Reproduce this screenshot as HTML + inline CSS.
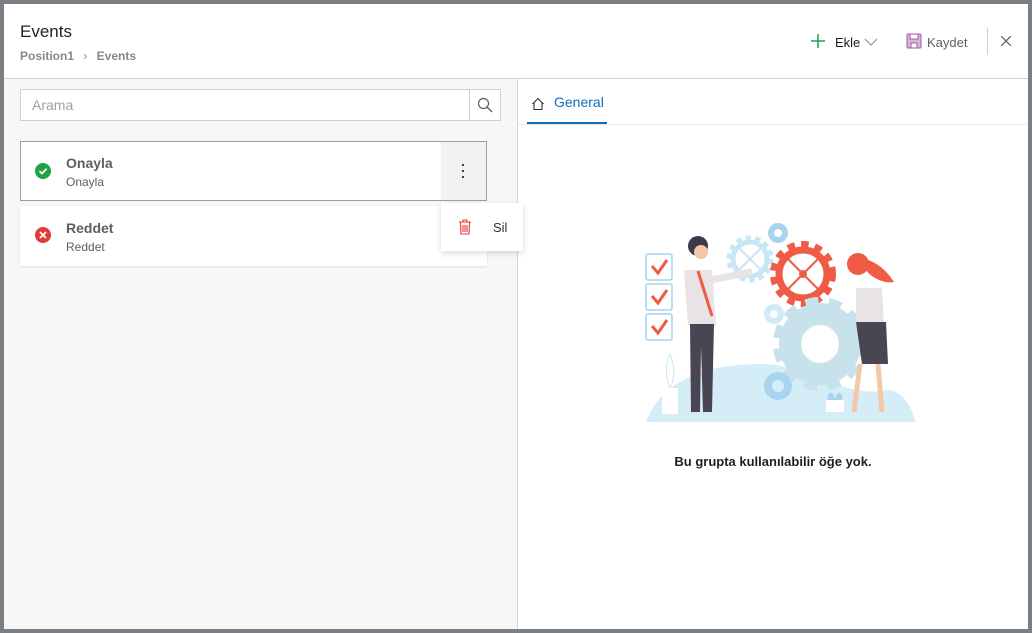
<!DOCTYPE html>
<html><head><meta charset="utf-8"><style>
*{box-sizing:border-box;margin:0;padding:0}
body{width:1032px;height:633px;background:#7b7e83;font-family:"Liberation Sans",sans-serif;position:relative;overflow:hidden}
.dlg{position:absolute;left:4px;top:4px;width:1024px;height:625px;background:#fff}
.abs{position:absolute}
</style></head><body>
<div class="dlg">
 <div class="abs" style="left:16px;top:18px;font-size:17px;color:#201f1e">Events</div>
 <div class="abs" style="left:16px;top:45px;font-size:12px;color:#8a8886;font-weight:bold">Position1 <span style="font-weight:normal;margin:0 6px">&#8250;</span> Events</div>
 <svg class="abs" style="left:806px;top:29px" width="16" height="16"><path d="M8 1V15M1 8H15" stroke="#1ea446" stroke-width="1.5"/></svg>
 <div class="abs" style="left:831px;top:31px;font-size:13px;color:#201f1e">Ekle</div>
 <svg class="abs" style="left:860px;top:34px" width="14" height="9"><path d="M1 1L7 7L13 1" stroke="#8a8886" fill="none"/></svg>
 <svg class="abs" style="left:902px;top:29px" width="16" height="16"><rect x="1" y="1" width="14" height="14" rx="1" fill="#d7b4d8" stroke="#a35aa6"/><rect x="4" y="1" width="8" height="5" fill="#fff" stroke="#a35aa6"/><rect x="5" y="10" width="6" height="5" fill="#fff" stroke="#a35aa6"/></svg>
 <div class="abs" style="left:923px;top:31px;font-size:13px;color:#605e5c">Kaydet</div>
 <div class="abs" style="left:983px;top:24px;width:1px;height:27px;background:#d2d0ce"></div>
 <svg class="abs" style="left:997px;top:32px" width="10" height="10"><path d="M0 0L10 10M10 0L0 10" stroke="#605e5c" stroke-width="1.2"/></svg>
 <div class="abs" style="left:0;top:74px;width:1024px;height:1px;background:#d2d0ce"></div>
 <div class="abs" style="left:0;top:75px;width:513px;height:550px;background:#f8f7f6"></div>
 <div class="abs" style="left:513px;top:75px;width:1px;height:550px;background:#d8d6d4"></div>
 <div class="abs" style="left:16px;top:85px;width:481px;height:32px;background:#fff;border:1px solid #d2d0ce"></div>
 <div class="abs" style="left:465px;top:85px;width:1px;height:32px;background:#d2d0ce"></div>
 <div class="abs" style="left:28px;top:93px;font-size:14px;color:#a19f9d">Arama</div>
 <svg class="abs" style="left:473px;top:93px" width="16" height="16"><circle cx="6.5" cy="6.5" r="5" fill="none" stroke="#605e5c" stroke-width="1.2"/><path d="M10 10L15 15" stroke="#605e5c" stroke-width="1.3"/></svg>
 <div class="abs" style="left:16px;top:137px;width:467px;height:60px;background:#fff;border:1px solid #a19f9d"></div>
 <div class="abs" style="left:437px;top:138px;width:45px;height:58px;background:#f3f2f1"></div>
 <div class="abs" style="left:458px;top:158px;width:2px;height:16px;background:radial-gradient(circle,#323130 1px,transparent 1.2px) 0 0/2px 6px"></div>
 <svg class="abs" style="left:31px;top:159px" width="16" height="16"><circle cx="8" cy="8" r="8" fill="#1ea446"/><path d="M4.5 8.2L7 10.5L11.5 5.8" stroke="#fff" stroke-width="1.8" fill="none"/></svg>
 <div class="abs" style="left:62px;top:151px;font-size:14px;font-weight:bold;color:#605e5c">Onayla</div>
 <div class="abs" style="left:62px;top:171px;font-size:12px;color:#605e5c">Onayla</div>
 <div class="abs" style="left:16px;top:202px;width:467px;height:60px;background:#fff;box-shadow:0 1px 2px rgba(0,0,0,.1)"></div>
 <svg class="abs" style="left:31px;top:223px" width="16" height="16"><circle cx="8" cy="8" r="8" fill="#e43a3a"/><path d="M5 5L11 11M11 5L5 11" stroke="#fff" stroke-width="1.8"/></svg>
 <div class="abs" style="left:62px;top:216px;font-size:14px;font-weight:bold;color:#605e5c">Reddet</div>
 <div class="abs" style="left:62px;top:236px;font-size:12px;color:#605e5c">Reddet</div>
 <div class="abs" style="left:437px;top:199px;width:82px;height:48px;background:#fff;box-shadow:0 2px 6px rgba(0,0,0,.15)"></div>
 <svg class="abs" style="left:454px;top:215px" width="14" height="16"><path d="M1 3H13M5 3V1H9V3M2.5 3L3 15H11L11.5 3M5 6V13M7 6V13M9 6V13" stroke="#e43a3a" fill="none" stroke-width="1.1"/></svg>
 <div class="abs" style="left:489px;top:216px;font-size:13px;color:#323130">Sil</div>
 <svg class="abs" style="left:527px;top:93px" width="14" height="14"><path d="M1.5 7L7 1.5L12.5 7M3 5.5V12.5H11V5.5" stroke="#323130" fill="none" stroke-width="1.1"/></svg>
 <div class="abs" style="left:550px;top:90px;font-size:14px;color:#0f6cbd">General</div>
 <div class="abs" style="left:523px;top:118px;width:80px;height:2px;background:#0f6cbd"></div>
 <div class="abs" style="left:514px;top:120px;width:510px;height:1px;background:#edebe9"></div>
 <svg class="abs" style="left:636px;top:210px" width="280" height="210">
  <path d="M6 208C20 170 60 150 120 150C170 150 200 185 250 176C266 180 272 196 276 208Z" fill="#d4edf6"/>
  <g fill="#fff" stroke="#a8d4ef" stroke-width="1.5"><rect x="6" y="40" width="26" height="26" rx="2"/><rect x="6" y="70" width="26" height="26" rx="2"/><rect x="6" y="100" width="26" height="26" rx="2"/></g>
  <g stroke="#ef5b44" stroke-width="3" fill="none"><path d="M12 52L18 59L27 46M12 82L18 89L27 76M12 112L18 119L27 106"/></g>
  <circle cx="110" cy="45" r="20" fill="none" stroke="#c8e6f3" stroke-width="7" stroke-dasharray="5 4"/><circle cx="110" cy="45" r="17" fill="none" stroke="#c8e6f3" stroke-width="5"/><path d="M98 33L122 57M122 33L98 57" stroke="#c8e6f3" stroke-width="2"/>
  <circle cx="163" cy="60" r="28" fill="none" stroke="#ef5b44" stroke-width="10" stroke-dasharray="7 6"/><circle cx="163" cy="60" r="24" fill="none" stroke="#ef5b44" stroke-width="7"/><path d="M147 44L179 76M179 44L147 76" stroke="#ef5b44" stroke-width="2"/><circle cx="163" cy="60" r="4" fill="#ef5b44"/>
  <circle cx="180" cy="130" r="33" fill="none" stroke="#c8e2ec" stroke-width="28" stroke-dasharray="10 8"/><circle cx="180" cy="130" r="30" fill="none" stroke="#c8e2ec" stroke-width="22"/>
  <circle cx="138" cy="19" r="7" fill="none" stroke="#a8d4ef" stroke-width="6"/>
  <circle cx="134" cy="100" r="7" fill="none" stroke="#d0ebf7" stroke-width="6"/>
  <circle cx="138" cy="172" r="10" fill="none" stroke="#a8d4ef" stroke-width="8"/>
  <path d="M22 200V174H38V200Z" fill="#fff"/><path d="M30 174C22 154 30 140 30 140C34 150 36 162 30 174" fill="#fff" stroke="#c8e6f3"/>
  <path d="M186 198V186H204V198Z" fill="#fff"/><path d="M188 186C186 176 194 176 195 186C196 175 204 178 202 186" fill="#a8d4ef"/>
  <circle cx="58" cy="32" r="10" fill="#3a3a4a"/><circle cx="61" cy="38" r="7" fill="#f4c7a8"/>
  <path d="M44 56H72L76 112H48Z" fill="#e8e4e6"/><path d="M70 66L112 58" stroke="#e8e4e6" stroke-width="7"/><path d="M58 57L72 102" stroke="#ef5b44" stroke-width="3"/>
  <path d="M50 110H74L72 198H63L61 132L60 198H51Z" fill="#4a4552"/>
  <path d="M210 46C226 40 244 52 254 68C242 70 230 62 226 56Z" fill="#ef5b44"/><circle cx="218" cy="50" r="11" fill="#ef5b44"/>
  <path d="M216 74H242L244 112H216Z" fill="#e8e4e6"/><path d="M216 108H246L248 150H222Z" fill="#4a4552"/>
  <path d="M220 150L214 198M238 150L242 198" stroke="#f4c7a8" stroke-width="5"/>
 </svg>
 <div class="abs" style="left:514px;top:450px;width:510px;text-align:center;font-size:13px;font-weight:bold;color:#201f1e">Bu grupta kullanılabilir öğe yok.</div>
</div>
</body></html>
